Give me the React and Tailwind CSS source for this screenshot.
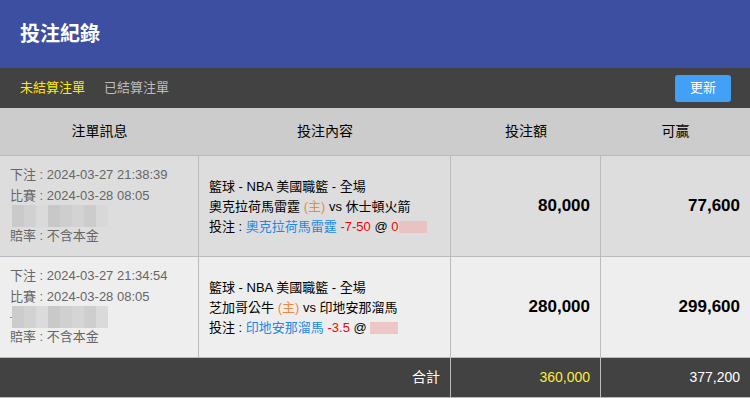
import React from 'react';

const FONT = { fontFamily: '"Liberation Sans", "Noto Sans CJK TC", sans-serif' };

const BETS = [
  {
    placed: '2024-03-27 21:38:39',
    match: '2024-03-28 08:05',
    home: '奧克拉荷馬雷霆',
    away: '休士頓火箭',
    pick: '奧克拉荷馬雷霆',
    line: '-7-50',
    stake: '80,000',
    win: '77,600',
    bg: 'bg-[#dddddd]',
    oddsLead: '0',
    dash: false,
  },
  {
    placed: '2024-03-27 21:34:54',
    match: '2024-03-28 08:05',
    home: '芝加哥公牛',
    away: '印地安那溜馬',
    pick: '印地安那溜馬',
    line: '-3.5',
    stake: '280,000',
    win: '299,600',
    bg: 'bg-[#eeeeee]',
    oddsLead: '',
    dash: true,
  },
];

// pixelated stand-in for the blurred account line
function Blurred({ dash }) {
  const blocks = ['bg-[#c9c9c9]', 'bg-[#d0d0d0]', 'bg-[#dadada]', 'bg-[#c6c6c6]', 'bg-[#cdcdcd]', 'bg-[#d3d3d3]', 'bg-[#cbcbcb]', 'bg-[#d8d8d8]'];
  return (
    <div className="flex items-center h-[22px] my-[-1px] opacity-90">
      {dash && <span className="w-[4px] h-[1px] bg-[#888888] mr-[-2px]" />}
      {blocks.map((c, i) => (
        <span key={i} className={`${c} w-[12px] h-full`} />
      ))}
    </div>
  );
}

function BetRow({ bet }) {
  return (
    <div className={`flex h-[101px] border-t border-[#bbbbbb] ${bet.bg}`}>
      <div className="w-[199px] border-r border-[#bbbbbb] flex flex-col justify-center pl-[10px] text-[13px] leading-[20.5px] text-[#666666]">
        <div>下注 : {bet.placed}</div>
        <div>比賽 : {bet.match}</div>
        <div className={bet.dash ? '' : 'pl-[2px]'}><Blurred dash={bet.dash} /></div>
        <div>賠率 : 不含本金</div>
      </div>
      <div className="w-[252px] border-r border-[#bbbbbb] flex flex-col justify-center pl-[10px] text-[13px] leading-[20px] text-black pt-[1px]">
        <div>籃球 - NBA 美國職籃 - 全場</div>
        <div>
          {bet.home} <span className="text-[#f0883e]">(主)</span> vs {bet.away}
        </div>
        <div className="flex items-center whitespace-pre">
          <span>投注 : </span>
          <span className="text-[#1e88e5]">{bet.pick}</span>
          <span className="text-[#ff0000]"> {bet.line}</span>
          <span> @ </span>
          <span className="text-[#ff0000]">{bet.oddsLead}</span>
          <span className="inline-block w-[28px] h-[12px] bg-[#ecbcbc] opacity-80" />
        </div>
      </div>
      <div className="w-[150px] border-r border-[#bbbbbb] flex items-center justify-end pr-[10px] text-[17px] font-bold text-black">
        {bet.stake}
      </div>
      <div className="flex-1 flex items-center justify-end pr-[10px] text-[17px] font-bold text-black">
        {bet.win}
      </div>
    </div>
  );
}

export default function App() {
  return (
    <div className="w-[750px] h-[398px] overflow-hidden bg-white" style={FONT}>
      <header className="h-[68px] bg-[#3c4fa1] flex items-center px-[20px]">
        <h1 className="text-[20px] font-bold text-white">投注紀錄</h1>
      </header>

      <nav className="h-[40px] bg-[#424242] flex items-center px-[20px] text-[13px]">
        <span className="text-[#ffeb00]">未結算注單</span>
        <span className="ml-[19px] text-[#bdbdbd]">已結算注單</span>
        <button className="ml-auto mr-[-1px] w-[56px] h-[27px] rounded-[3px] bg-[#42a1f7] text-white text-[13px]">
          更新
        </button>
      </nav>

      <div className="h-[47px] bg-[#cccccc] flex items-center text-[14px] text-black">
        <div className="w-[199px] text-center">注單訊息</div>
        <div className="w-[252px] text-center">投注內容</div>
        <div className="w-[150px] text-center">投注額</div>
        <div className="flex-1 text-center">可贏</div>
      </div>

      {BETS.map((b) => (
        <BetRow key={b.placed} bet={b} />
      ))}

      <div className="flex h-[41px] bg-[#424242] border-t border-b border-[#bbbbbb] text-[14px]">
        <div className="w-[451px] border-r border-[#bbbbbb] flex items-center justify-end pr-[10px] text-white">
          合計
        </div>
        <div className="w-[150px] border-r border-[#bbbbbb] flex items-center justify-end pr-[10px] text-[#ffeb3b]">
          360,000
        </div>
        <div className="flex-1 flex items-center justify-end pr-[10px] text-white">
          377,200
        </div>
      </div>
    </div>
  );
}
